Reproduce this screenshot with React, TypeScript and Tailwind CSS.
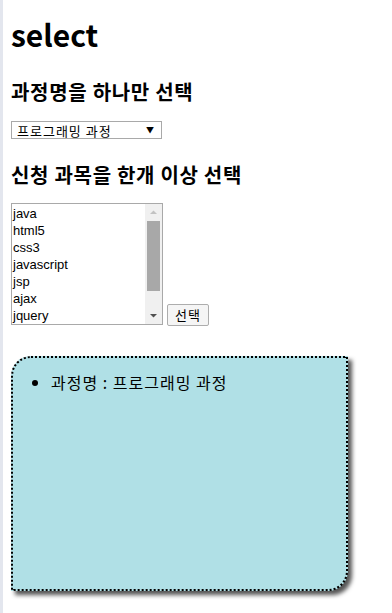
const COURSES = ['java', 'html5', 'css3', 'javascript', 'jsp', 'ajax', 'jquery']

const KR = "font-['Malgun_Gothic','Noto_Sans_CJK_KR',sans-serif]"

function FakeSelect() {
  return (
    <div className="relative mt-[17px] h-[18px] w-[151px] overflow-hidden border border-[#a9a9a9] bg-white">
      <span className={`${KR} absolute left-[5px] top-[0px] text-[13px] leading-[17px] tracking-[1px] text-black`}>
        프로그래밍 과정
      </span>
      <span className="absolute right-[7px] top-[2px] text-[8px] leading-[11px] text-black">▼</span>
    </div>
  )
}

function ListBox() {
  return (
    <div className="flex h-[122px] w-[152px] border border-[#a9a9a9] bg-white">
      <ul className="flex-1 overflow-hidden pl-[1px] pt-[1px] font-['Liberation_Sans',Arial,sans-serif] text-[13px] leading-[17px] text-black">
        {COURSES.map((c) => (
          <li key={c}>{c}</li>
        ))}
      </ul>
      <div className="flex w-[17px] flex-col items-center bg-[#f0f0f0]">
        <svg width="17" height="17" viewBox="0 0 17 17">
          <path d="M5 10 L8.5 6.5 L12 10 Z" fill="#c2c2c2" />
        </svg>
        <div className="w-[13px] flex-1">
          <div className="h-[70px] w-full bg-[#a8a8a8]" />
        </div>
        <svg width="17" height="17" viewBox="0 0 17 17">
          <path d="M5 7 L12 7 L8.5 10.5 Z" fill="#505050" />
        </svg>
      </div>
    </div>
  )
}

export default function App() {
  return (
    <div className="flex min-h-[613px] bg-white">
      <div className="w-[3px] shrink-0 bg-[#e3e6ee]" />
      <div className={`${KR} flex-1 pl-[8px] text-black`}>
        <h1 className="mt-[16px] text-[30px] font-bold leading-[37px]">select</h1>
        <h2 className="mt-[26px] text-[20px] font-bold leading-[25px] tracking-[0.7px]">과정명을 하나만 선택</h2>
        <FakeSelect />
        <h2 className="mt-[23px] text-[20px] font-bold leading-[25px] tracking-[0.7px]">신청 과목을 한개 이상 선택</h2>
        <div className="mt-[16px] flex items-end gap-[4px]">
          <ListBox />
          <button className="mb-[-1px] h-[22px] w-[42px] rounded-[2px] border border-[#adadad] bg-[#f5f5f5] text-[13px] leading-[18px] tracking-[1px]">
            선택
          </button>
        </div>
        <div className="mt-[31px] h-[235px] w-[337px] rounded-tl-[20px] rounded-br-[20px] border-2 border-dotted border-black bg-[#b0e0e6] shadow-[4px_4px_4px_#555]">
          <ul className="mt-[15px] list-disc pl-[38px] text-[16px] leading-[18px] tracking-[1px]">
            <li>과정명 : 프로그래밍 과정</li>
          </ul>
        </div>
      </div>
    </div>
  )
}
